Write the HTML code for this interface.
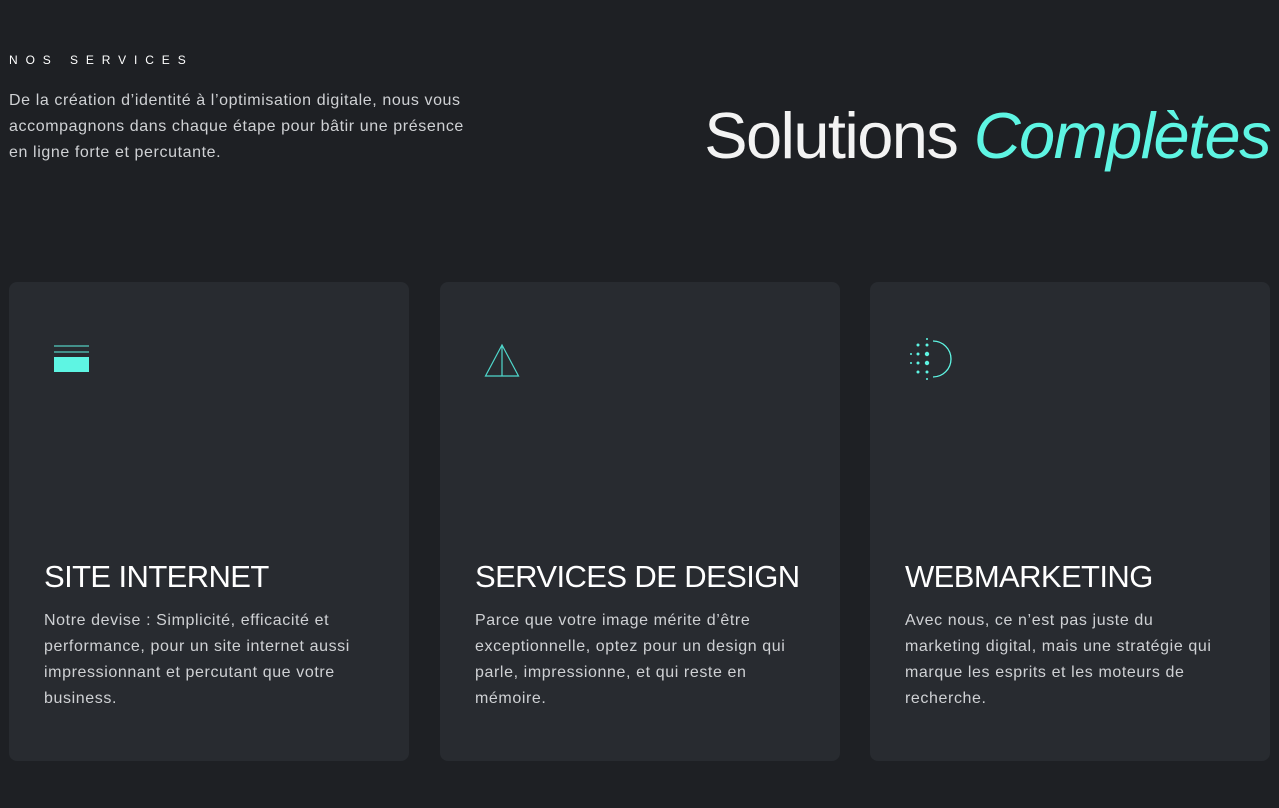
<!DOCTYPE html>
<html><head><meta charset="utf-8"><style>
*{margin:0;padding:0;box-sizing:border-box}
body{width:1279px;height:808px;background:#1e2024;font-family:"Liberation Sans",sans-serif;position:relative;overflow:hidden;color:#fff}
.eyebrow{position:absolute;left:9px;top:53px;font-size:12px;letter-spacing:7.9px;color:#fff}
.intro{position:absolute;left:9px;top:88px;width:478px;font-size:16px;line-height:26px;color:#cfd1d4;letter-spacing:.6px}
h1{position:absolute;right:9px;top:98px;font-size:65px;font-weight:400;letter-spacing:-1.6px;line-height:76px;white-space:nowrap;color:#f3f3f3}
h1 i{color:#5ef5e3;font-weight:400}
.card{position:absolute;top:282px;width:400px;height:479px;background:#282b30;border-radius:8px}
.card svg{position:absolute;left:0;top:0}
.card h2{position:absolute;left:35px;top:277px;font-size:31px;font-weight:400;letter-spacing:-.6px;color:#fff}
.card p{position:absolute;left:35px;top:326px;width:325px;font-size:16px;line-height:26px;color:#cfd1d4;letter-spacing:.6px}
</style></head><body>
<div class="eyebrow">NOS SERVICES</div>
<div class="intro">De la création d’identité à l’optimisation digitale, nous vous accompagnons dans chaque étape pour bâtir une présence en ligne forte et percutante.</div>
<h1>Solutions <i>Complètes</i></h1>
<div class="card" style="left:9px">
<svg width="120" height="120"><rect x="45" y="63.5" width="35" height="1" fill="#5ef5e3"/><rect x="45" y="69.5" width="35" height="1" fill="#5ef5e3"/><rect x="45" y="75" width="35" height="15" fill="#5ef5e3"/></svg>
<h2>SITE INTERNET</h2>
<p>Notre devise : Simplicité, efficacité et performance, pour un site internet aussi impressionnant et percutant que votre business.</p>
</div>
<div class="card" style="left:440px">
<svg width="120" height="120"><path d="M62 63 L45.5 94 H78.5 Z M62 63 V94" fill="none" stroke="#4fd8cc" stroke-width="1.2"/></svg>
<h2>SERVICES DE DESIGN</h2>
<p>Parce que votre image mérite d’être exceptionnelle, optez pour un design qui parle, impressionne, et qui reste en mémoire.</p>
</div>
<div class="card" style="left:870px">
<svg width="120" height="120" fill="#5ef5e3"><circle cx="57" cy="57" r="1"/><circle cx="57" cy="63" r="1.5"/><circle cx="57" cy="72" r="2.2"/><circle cx="57" cy="81" r="2.2"/><circle cx="57" cy="90" r="1.5"/><circle cx="57" cy="97" r="1"/><circle cx="48" cy="63" r="1.5"/><circle cx="48" cy="72" r="1.5"/><circle cx="48" cy="81" r="1.5"/><circle cx="48" cy="90" r="1.5"/><circle cx="41" cy="72" r="1"/><circle cx="41" cy="81" r="1"/><path d="M63 59 A18 18 0 0 1 63 95" fill="none" stroke="#5ef5e3" stroke-width="1.3"/></svg>
<h2>WEBMARKETING</h2>
<p>Avec nous, ce n’est pas juste du marketing digital, mais une stratégie qui marque les esprits et les moteurs de recherche.</p>
</div>
</body></html>
